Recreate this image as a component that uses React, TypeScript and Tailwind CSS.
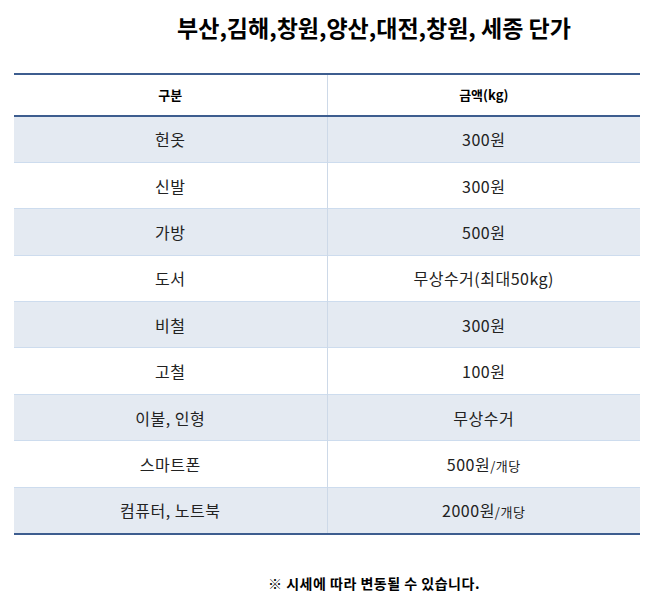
import React from "react"

type Row = {
  item: string
  price: string
  unit?: string
}

const rows: Row[] = [
  { item: "헌옷", price: "300원" },
  { item: "신발", price: "300원" },
  { item: "가방", price: "500원" },
  { item: "도서", price: "무상수거(최대50kg)" },
  { item: "비철", price: "300원" },
  { item: "고철", price: "100원" },
  { item: "이불, 인형", price: "무상수거" },
  { item: "스마트폰", price: "500원", unit: "/개당" },
  { item: "컴퓨터, 노트북", price: "2000원", unit: "/개당" },
]

export default function App() {
  return (
    <div className="w-[666px] min-h-[602px] bg-white text-[#222] font-['Noto_Sans_CJK_KR','Noto_Sans',sans-serif]">
      {/* Title */}
      <div className="flex justify-center pl-[82px] pt-[10px] h-[73px]">
        <h1 className="text-[23px] font-bold leading-[34px] text-black">부산,김해,창원,양산,대전,창원, 세종 단가</h1>
      </div>

      {/* Price table */}
      <div className="px-[14px] w-[654px]">
        <table className="w-[626px] table-fixed border-collapse border-t-2 border-b-2 border-[#3d5d8f]">
          <thead>
            <tr className="h-[42px] border-b-2 border-[#3d5d8f]">
              <th className="w-[313px] border-r border-[#cdd9e8] text-[13px] font-bold text-black text-center">구분</th>
              <th className="w-[313px] text-[13px] font-bold text-black text-center">금액(kg)</th>
            </tr>
          </thead>
          <tbody>
            {rows.map((row, i) => (
              <tr
                key={row.item}
                className={`h-[46.4px] ${i % 2 === 0 ? "bg-[#e4eaf2]" : "bg-white"} ${i < rows.length - 1 ? "border-b border-[#cddcee]" : ""}`}
              >
                <td className="border-r border-[#cdd9e8] text-[16px] tracking-[0.5px] text-center text-[#222]">{row.item}</td>
                <td className="text-[16px] tracking-[0.5px] text-center text-[#222]">
                  {row.price}
                  {row.unit && <span className="text-[13px]">{row.unit}</span>}
                </td>
              </tr>
            ))}
          </tbody>
        </table>
      </div>

      {/* Note */}
      <p className="mt-[38px] pl-[82px] text-center text-[14px] tracking-[0.5px] font-bold text-black">※ 시세에 따라 변동될 수 있습니다.</p>
    </div>
  )
}
